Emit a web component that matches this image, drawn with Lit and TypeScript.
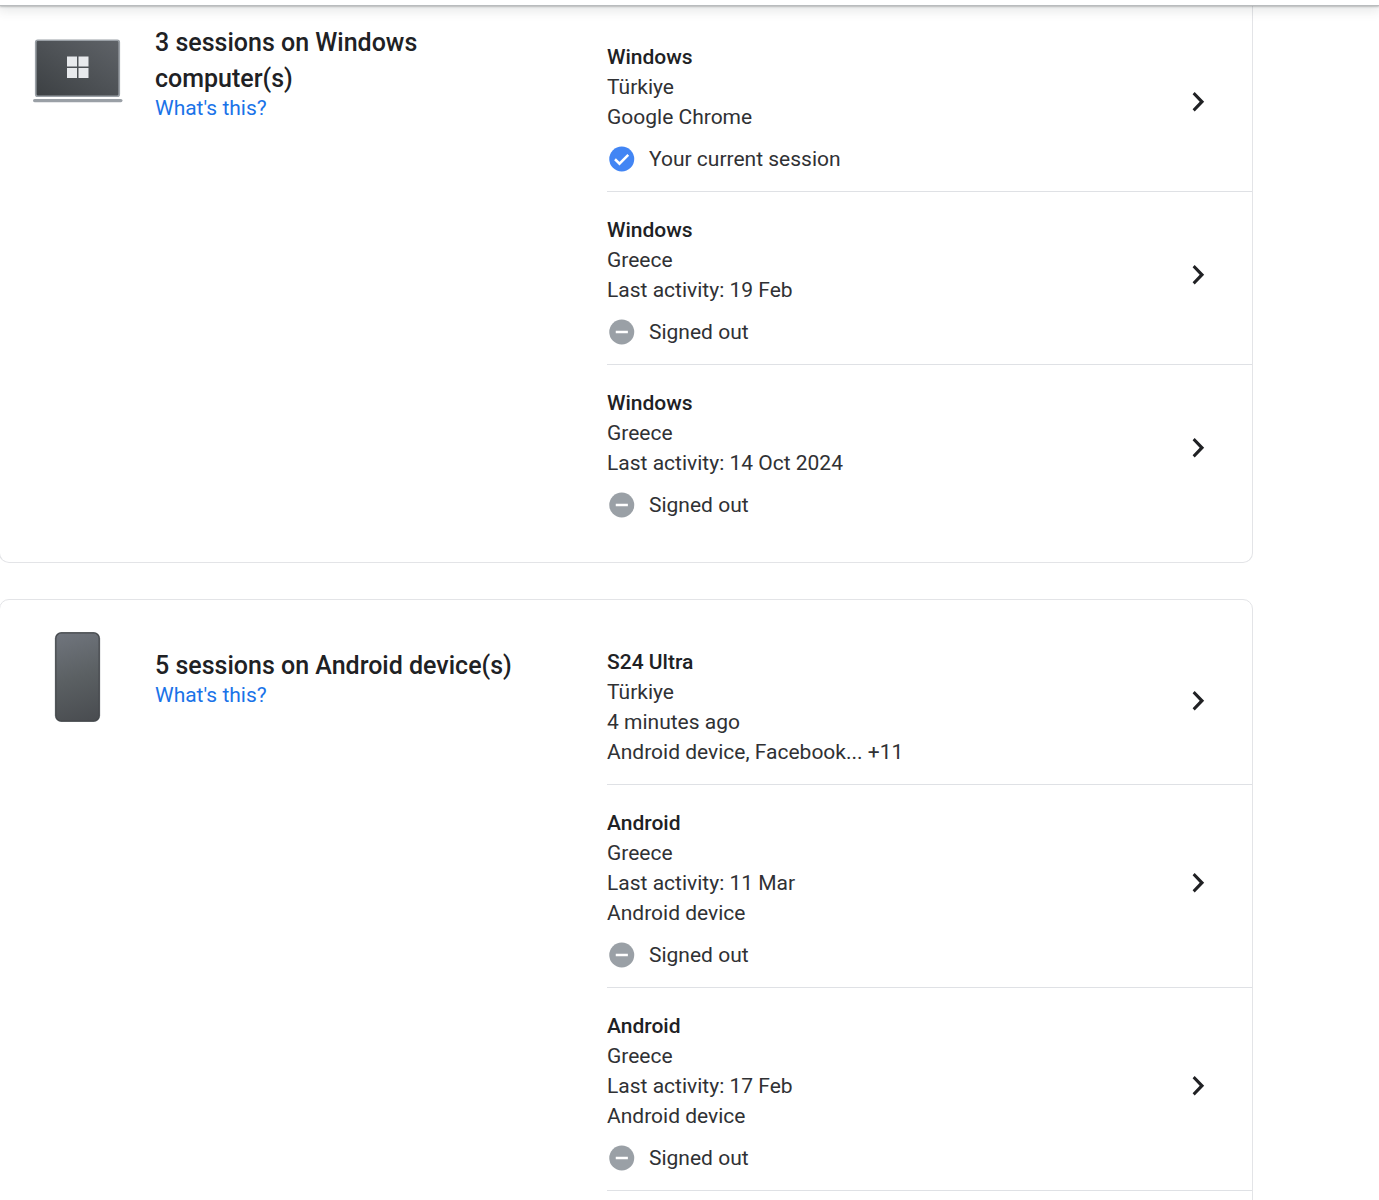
import { LitElement, html, svg, css, nothing } from "lit";
import { customElement, property } from "lit/decorators.js";
import { classMap } from "lit/directives/class-map.js";

type Status = "current" | "signed-out";

interface Session {
  name: string;
  details: string[];
  status?: Status;
}

interface DeviceGroup {
  title: string;
  kind: "laptop" | "phone";
  continued: boolean;
  more: boolean;
  sessions: Session[];
}

const groups: DeviceGroup[] = [
  {
    title: "3 sessions on Windows computer(s)",
    kind: "laptop",
    continued: true,
    more: false,
    sessions: [
      { name: "Windows", details: ["Türkiye", "Google Chrome"], status: "current" },
      { name: "Windows", details: ["Greece", "Last activity: 19 Feb"], status: "signed-out" },
      { name: "Windows", details: ["Greece", "Last activity: 14 Oct 2024"], status: "signed-out" },
    ],
  },
  {
    title: "5 sessions on Android device(s)",
    kind: "phone",
    continued: false,
    more: true,
    sessions: [
      { name: "S24 Ultra", details: ["Türkiye", "4 minutes ago", "Android device, Facebook... +11"] },
      { name: "Android", details: ["Greece", "Last activity: 11 Mar", "Android device"], status: "signed-out" },
      { name: "Android", details: ["Greece", "Last activity: 17 Feb", "Android device"], status: "signed-out" },
    ],
  },
];

const laptopArt = svg`
  <defs>
    <linearGradient id="screen" x1="0" y1="1" x2="1" y2="0">
      <stop offset="0" stop-color="#3c4043"></stop>
      <stop offset="1" stop-color="#5f6368"></stop>
    </linearGradient>
  </defs>
  <rect x="2.75" y="13.25" width="83.5" height="56" rx="2" fill="url(#screen)" stroke="#9aa0a6" stroke-width="1.7"></rect>
  <rect x="0" y="72" width="89.5" height="3.2" rx="1.6" fill="#9aa0a6"></rect>
  <path d="M34 29.5h10v10H34zM45.5 29.5h10v10h-10zM34 41h10v10H34zM45.5 41h10v10h-10z" fill="#e8eaed"></path>`;

const phoneArt = svg`
  <defs>
    <linearGradient id="body" gradientUnits="userSpaceOnUse" x1="30" y1="0" x2="58" y2="90">
      <stop offset="0" stop-color="#70757d"></stop>
      <stop offset="0.5" stop-color="#5b6063"></stop>
      <stop offset="1" stop-color="#494c50"></stop>
    </linearGradient>
  </defs>
  <rect x="21.8" y="0" width="45.4" height="90" rx="6.5" fill="#9aa0a6"></rect>
  <rect x="22.8" y="0.9" width="43.4" height="88.2" rx="5.6" fill="url(#body)" stroke="#44474a" stroke-width="1.2"></rect>`;

@customElement("session-row")
class SessionRow extends LitElement {
  @property({ attribute: false }) session!: Session;

  static styles = css`
    :host {
      display: block;
    }
    .row {
      display: flex;
      align-items: center;
      justify-content: space-between;
      padding: 23px 35px 17px 0;
      color: #303134;
      text-decoration: none;
      font-size: 21px;
      line-height: 30px;
    }
    .name {
      color: #202124;
      font-weight: 500;
    }
    .status {
      display: flex;
      align-items: center;
      gap: 12px;
      margin-top: 12px;
    }
    .badge {
      width: 30px;
      height: 30px;
      fill: #9aa0a6;
    }
    .badge.current {
      fill: #4285f4;
    }
    .mark {
      fill: none;
      stroke: #fff;
      stroke-width: 2;
    }
    .chevron {
      flex: none;
      width: 38px;
      height: 38px;
      margin-bottom: 12px;
      fill: #202124;
    }
  `;

  private renderStatus(status: Status) {
    const current = status === "current";
    return html`
      <div class="status">
        <svg class=${classMap({ badge: true, current })} viewBox="0 0 24 24" aria-hidden="true">
          <circle cx="11.8" cy="12" r="10"></circle>
          <path class="mark" d=${current ? "M6.4 12.2l3.6 3.5 7-7" : "M7 12h9.7"}></path>
        </svg>
        <span>${current ? "Your current session" : "Signed out"}</span>
      </div>
    `;
  }

  render() {
    const { name, details, status } = this.session;
    return html`
      <a class="row" href="#session">
        <div>
          <div class="name">${name}</div>
          ${details.map((line) => html`<div>${line}</div>`)}
          ${status ? this.renderStatus(status) : nothing}
        </div>
        <svg class="chevron" viewBox="0 0 24 24" aria-hidden="true">
          <path d="M8.59 16.59L13.07 11.85 8.59 7.11 9.9 5.7l6 6.15-6 6.15z"></path>
        </svg>
      </a>
    `;
  }
}

@customElement("device-card")
class DeviceCard extends LitElement {
  @property({ attribute: false }) group!: DeviceGroup;

  static styles = css`
    :host {
      display: block;
    }
    .card {
      display: grid;
      grid-template-columns: 607fr 645fr;
      align-items: start;
      border: 1px solid #e3e4e7;
      border-radius: 10px;
    }
    .card.continued {
      border-top: 0;
      border-top-left-radius: 0;
      border-top-right-radius: 0;
    }
    .head {
      display: flex;
      align-items: center;
      gap: 32px;
      padding: 32px 80px 32px 33px;
    }
    .continued .head {
      padding-top: 19px;
    }
    .art {
      flex: none;
      width: 90px;
      height: 90px;
    }
    .title {
      margin: 0;
      color: #202124;
      font-size: 25px;
      font-weight: 500;
      line-height: 36px;
    }
    .help {
      display: block;
      color: #1a73e8;
      font-size: 21px;
      line-height: 22px;
      text-decoration: none;
    }
    .sessions {
      margin: 0;
      padding: 24px 0 25px;
      list-style: none;
    }
    .continued .sessions {
      padding-top: 13px;
    }
    .sessions li + li {
      border-top: 1px solid #dfe1e5;
    }
    .more .sessions li:last-child {
      border-bottom: 1px solid #dfe1e5;
    }
  `;

  render() {
    const { title, kind, continued, more, sessions } = this.group;
    return html`
      <section class=${classMap({ card: true, continued, more })}>
        <div class="head">
          <svg class="art" viewBox="0 0 90 90" aria-hidden="true">
            ${kind === "laptop" ? laptopArt : phoneArt}
          </svg>
          <div>
            <h2 class="title">${title}</h2>
            <a class="help" href="#help">What's this?</a>
          </div>
        </div>
        <ul class="sessions">
          ${sessions.map((s) => html`<li><session-row .session=${s}></session-row></li>`)}
        </ul>
      </section>
    `;
  }
}

@customElement("app-root")
class AppRoot extends LitElement {
  static styles = css`
    :host {
      display: block;
      min-height: 100vh;
      overflow: hidden;
      background: #fff;
      font-family: Roboto, "Liberation Sans", sans-serif;
    }
    .bar {
      position: relative;
      height: 5px;
      background: #fff;
      border-bottom: 1px solid #b9bcbe;
      box-shadow: 0 1px 2px rgba(60, 64, 67, 0.3), 0 2px 12px 2px rgba(60, 64, 67, 0.15);
    }
    .list {
      display: flex;
      flex-direction: column;
      gap: 36px;
      margin-left: -1px;
      padding-right: 126px;
    }
  `;

  render() {
    return html`
      <header class="bar"></header>
      <main class="list">
        ${groups.map((g) => html`<device-card .group=${g}></device-card>`)}
      </main>
    `;
  }
}
